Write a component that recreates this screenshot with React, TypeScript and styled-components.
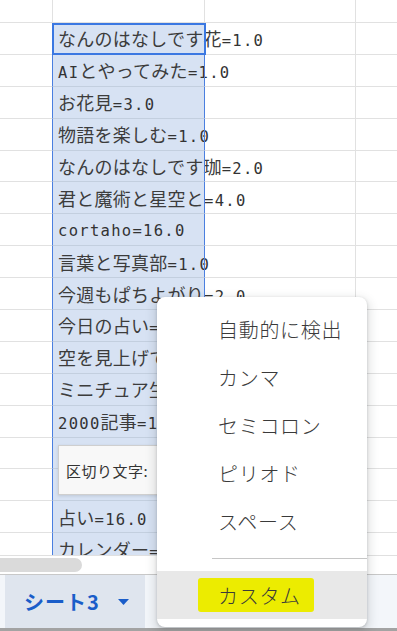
import React from "react";
import styled, { createGlobalStyle } from "styled-components";

const GlobalStyle = createGlobalStyle`
  html, body { margin: 0; padding: 0; background: #fff; overflow: hidden; }
  * { box-sizing: border-box; }
`;

const Screen = styled.div`
  position: relative;
  width: 397px;
  height: 631px;
  display: flex;
  flex-direction: column;
  overflow: hidden;
  background: #fff;
`;

const Sheet = styled.div`
  flex: 1;
  min-height: 0;
  overflow: hidden;
  display: flex;
  flex-direction: column;
`;

const Row = styled.div<{ $h: number }>`
  flex: none;
  height: ${(p) => p.$h}px;
  display: grid;
  grid-template-columns: 52px 152px 151px 1fr;
`;

const Cell = styled.div<{ $sel?: boolean; $edge?: boolean; $active?: boolean }>`
  position: ${(p) => (p.$active ? "relative" : "static")};
  min-width: 0;
  border-left: 1px solid ${(p) => (p.$edge ? "#4a7fe0" : "#e1e1e1")};
  border-bottom: 1px solid ${(p) => (p.$sel ? "#c3cfdf" : "#e1e1e1")};
  background: ${(p) => (p.$sel ? "#d7e2f3" : "transparent")};
  display: flex;
  align-items: center;
  padding: 3px 0 0 5px;
  white-space: nowrap;
  overflow: visible;
  &:first-child {
    border-left: none;
  }
  &::after {
    content: "";
    display: ${(p) => (p.$active ? "block" : "none")};
    position: absolute;
    top: 0;
    left: -1px;
    right: -2px;
    bottom: -1px;
    border: 2px solid #3b78e2;
    pointer-events: none;
  }
`;

const CellText = styled.span`
  font-family: "DejaVu Sans Mono", "Liberation Mono", monospace;
  font-size: 15.5px;
  letter-spacing: 1.3px;
  line-height: 20px;
  color: #333;
`;

const Jp = styled.span`
  font-family: "Noto Sans CJK JP", sans-serif;
  font-size: 18px;
  letter-spacing: 0.25px;
  color: #3c3c3c;
`;

const HScroll = styled.div`
  flex: none;
  height: 20px;
  border-top: 1px solid #e0e0e0;
  border-bottom: 1px solid #c8c8c8;
  padding-top: 2px;
  background: #fff;
`;

const Thumb = styled.div`
  width: 90px;
  height: 14px;
  margin-left: -8px;
  border-radius: 7px;
  background: #dadada;
`;

const TabBar = styled.div`
  flex: none;
  height: 56px;
  border-bottom: 3px solid #a3a3a3;
  background: #f3f6fa;
  display: flex;
  padding-left: 5px;
`;

const Tab = styled.div`
  width: 140px;
  background: #dfe5ee;
  display: flex;
  align-items: center;
  padding-left: 19px;
  gap: 18px;
  color: #1a5dc9;
  font-family: "Noto Sans CJK JP", sans-serif;
  font-weight: 700;
  font-size: 20px;
  letter-spacing: 1px;
`;

const PasteBox = styled.div`
  position: absolute;
  left: 58px;
  top: 445px;
  width: 140px;
  height: 50px;
  background: #f8f8f8;
  border: 1px solid #cfcfcf;
  box-shadow: 0 1px 3px rgba(0, 0, 0, 0.12);
  display: flex;
  align-items: center;
  padding-left: 7px;
  font-family: "Noto Sans CJK JP", sans-serif;
  font-size: 15px;
  letter-spacing: 0.5px;
  color: #333;
`;

const Menu = styled.div`
  position: absolute;
  left: 157px;
  top: 297px;
  width: 210px;
  background: #fff;
  border-radius: 8px;
  box-shadow: 0 4px 10px 3px rgba(60, 64, 67, 0.14), 0 1px 3px rgba(60, 64, 67, 0.25);
  padding: 8px 0;
  z-index: 2;
`;

const MenuItem = styled.div<{ $hover?: boolean }>`
  height: 48px;
  display: flex;
  align-items: center;
  padding-left: 61px;
  font-family: "Noto Sans CJK JP", sans-serif;
  font-size: 20px;
  font-weight: 300;
  letter-spacing: 0.7px;
  color: #3a3a3a;
  background: ${(p) => (p.$hover ? "#e8e8e8" : "transparent")};
`;

const Separator = styled.div`
  height: 26px;
  display: flex;
  align-items: center;
  padding-left: 55px;
  &::before {
    content: "";
    flex: 1;
    height: 1px;
    background: #c6c6c6;
  }
`;

const Marker = styled.span`
  display: inline-flex;
  align-items: center;
  height: 34px;
  margin-left: -20px;
  padding: 0 13px 0 20px;
  background: #ecec00;
  border-radius: 3px;
`;

const rows = [
  "なんのはなしです花=1.0",
  "AIとやってみた=1.0",
  "お花見=3.0",
  "物語を楽しむ=1.0",
  "なんのはなしです珈=2.0",
  "君と魔術と星空と=4.0",
  "cortaho=16.0",
  "言葉と写真部=1.0",
  "今週もぱちよがり=2.0",
  "今日の占い=1.0",
  "空を見上げて=1.0",
  "ミニチュア生活=1.0",
  "2000記事=1.0",
  "",
  "",
  "占い=16.0",
  "カレンダー=1.0",
];

const Mixed: React.FC<{ text: string }> = ({ text }) => {
  const parts = text.split(/([^\x00-\x7f]+)/);
  return (
    <CellText>
      {parts.map((p, i) => (i % 2 === 1 ? <Jp key={i}>{p}</Jp> : <React.Fragment key={i}>{p}</React.Fragment>))}
    </CellText>
  );
};

const menuItems = ["自動的に検出", "カンマ", "セミコロン", "ピリオド", "スペース"];

export default function App() {
  return (
    <>
      <GlobalStyle />
      <Screen>
        <Sheet>
          <Row $h={23}>
            <Cell />
            <Cell />
            <Cell />
            <Cell />
          </Row>
          {rows.map((t, i) => (
            <Row key={i} $h={31.9}>
              <Cell />
              <Cell $sel $edge $active={i === 0}>
                {t && <Mixed text={t} />}
              </Cell>
              <Cell $edge />
              <Cell />
            </Row>
          ))}
        </Sheet>
        <HScroll>
          <Thumb />
        </HScroll>
        <TabBar>
          <Tab>
            <span>シート3</span>
            <svg width="11" height="6" viewBox="0 0 11 6">
              <path d="M0 0 L11 0 L5.5 6 Z" fill="#1a5dc9" />
            </svg>
          </Tab>
        </TabBar>
        <PasteBox>区切り文字:</PasteBox>
        <Menu>
          {menuItems.map((m) => (
            <MenuItem key={m}>{m}</MenuItem>
          ))}
          <Separator />
          <MenuItem $hover>
            <Marker>カスタム</Marker>
          </MenuItem>
        </Menu>
      </Screen>
    </>
  );
}
